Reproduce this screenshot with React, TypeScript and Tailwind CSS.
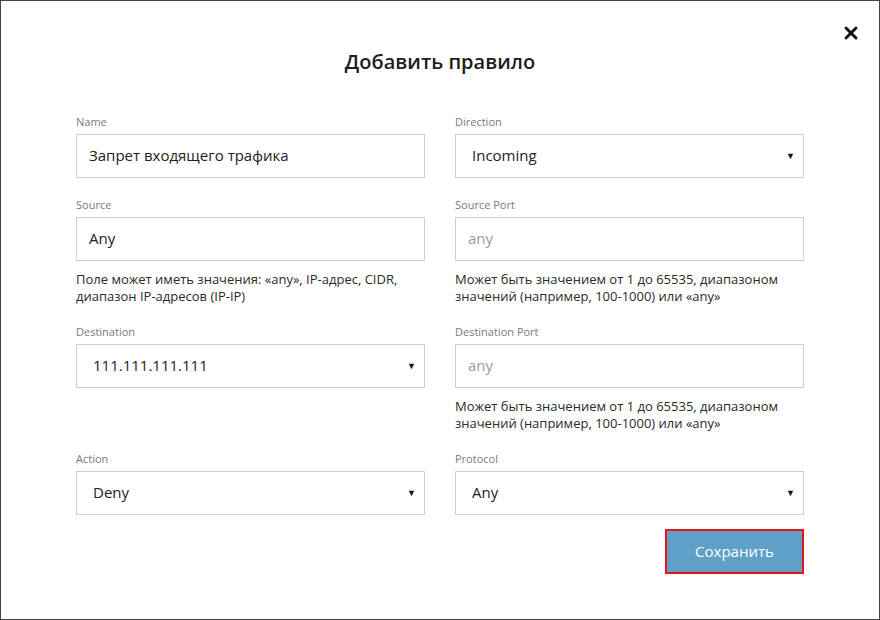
import { X } from "lucide-react";

type Field = {
	label: string;
	value: string;
	kind: "input" | "select";
	placeholder?: boolean;
	help?: string;
};

const fields: Field[] = [
	{ label: "Name", value: "Запрет входящего трафика", kind: "input" },
	{ label: "Direction", value: "Incoming", kind: "select" },
	{
		label: "Source",
		value: "Any",
		kind: "input",
		help: "Поле может иметь значения: «any», IP-адрес, CIDR, диапазон IP-адресов (IP-IP)",
	},
	{
		label: "Source Port",
		value: "any",
		kind: "input",
		placeholder: true,
		help: "Может быть значением от 1 до 65535, диапазоном значений (например, 100-1000) или «any»",
	},
	{ label: "Destination", value: "111.111.111.111", kind: "select" },
	{
		label: "Destination Port",
		value: "any",
		kind: "input",
		placeholder: true,
		help: "Может быть значением от 1 до 65535, диапазоном значений (например, 100-1000) или «any»",
	},
	{ label: "Action", value: "Deny", kind: "select" },
	{ label: "Protocol", value: "Any", kind: "select" },
];

function FormField({ field }: { field: Field }) {
	return (
		<div className="flex flex-col">
			<label className="mb-[5px] text-[11px] leading-[14px] text-[#7a7a7a]">{field.label}</label>
			<div className="flex h-[44px] items-center justify-between border border-[#cfcfcf] bg-white pb-[1px]">
				{field.kind === "select" ? (
					<>
						<span className="pl-[16px] text-[15px] text-[#222]">{field.value}</span>
						<span className="pr-[8px] text-[9px] text-[#111]">▼</span>
					</>
				) : (
					<span
						className={`pl-[12px] text-[15px] ${field.placeholder ? "text-[#9a9a9a]" : "text-[#222]"}`}
					>
						{field.value}
					</span>
				)}
			</div>
			{field.help && (
				<p className="mt-[10px] text-[13px] leading-[17px] text-[#2a2a2a]">{field.help}</p>
			)}
		</div>
	);
}

export default function App() {
	return (
		<div
			className="relative h-[620px] w-[880px] border border-[#444] bg-white"
			style={{ fontFamily: '"Open Sans", "Noto Sans", sans-serif' }}
		>
			<button className="absolute right-[18px] top-[22px] text-[#111]">
				<X size={20} strokeWidth={3.5} />
			</button>

			<h1 className="pt-[46px] text-center text-[20px] font-semibold leading-[30px] text-[#1c1c1c]">
				Добавить правило
			</h1>

			<div className="mt-[38px] grid grid-cols-2 gap-x-[30px] gap-y-[20px] px-[75px]">
				{fields.map((f) => (
					<FormField key={f.label} field={f} />
				))}
			</div>

			<div className="mt-[14px] flex justify-end px-[75px]">
				<button className="h-[45px] w-[139px] border-2 border-[#e8141a] bg-[#5fa0c9] text-[15px] text-white">
					Сохранить
				</button>
			</div>
		</div>
	);
}
